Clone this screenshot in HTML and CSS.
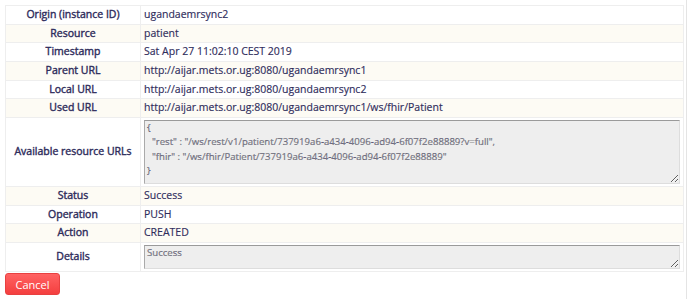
FILE: index.html
```html
<!DOCTYPE html>
<html lang="en">
<head>
  <meta charset="UTF-8" />
  <title>Sync Record Details</title>
  <meta name="viewport" content="width=device-width, initial-scale=1.0"/>
  <link rel="stylesheet" href="styles.css">
</head>
<body>
  <div class="page">
    <table class="details">
      <tr>
        <th>Origin (instance ID)</th>
        <td>ugandaemrsync2</td>
      </tr>
      <tr>
        <th>Resource</th>
        <td>patient</td>
      </tr>
      <tr>
        <th>Timestamp</th>
        <td>Sat Apr 27 11:02:10 CEST 2019</td>
      </tr>
      <tr>
        <th>Parent URL</th>
        <td>http://aijar.mets.or.ug:8080/ugandaemrsync1</td>
      </tr>
      <tr>
        <th>Local URL</th>
        <td>http://aijar.mets.or.ug:8080/ugandaemrsync2</td>
      </tr>
      <tr>
        <th>Used URL</th>
        <td>http://aijar.mets.or.ug:8080/ugandaemrsync1/ws/fhir/Patient</td>
      </tr>
      <tr>
        <th>Available resource URLs</th>
        <td><textarea class="box box-tall" disabled>{
  "rest" : "/ws/rest/v1/patient/737919a6-a434-4096-ad94-6f07f2e88889?v=full",
  "fhir" : "/ws/fhir/Patient/737919a6-a434-4096-ad94-6f07f2e88889"
}</textarea></td>
      </tr>
      <tr>
        <th>Status</th>
        <td>Success</td>
      </tr>
      <tr>
        <th>Operation</th>
        <td>PUSH</td>
      </tr>
      <tr>
        <th>Action</th>
        <td>CREATED</td>
      </tr>
      <tr>
        <th>Details</th>
        <td><textarea class="box box-short" disabled>Success</textarea></td>
      </tr>
    </table>

    <button type="button" class="cancel">Cancel</button>
  </div>
</body>
</html>
```

FILE: styles.css
```css
html,
body {
  margin: 0;
  height: 100%;
}

body {
  font-family: "Open Sans", sans-serif;
  font-size: 10.5px;
  color: #2f2d5c;
  background: white;
}

.page {
  width: 687px;
  height: 100%;
  box-sizing: border-box;
  padding: 5px 0 0 5px;
  border-right: 1px solid #e4e4e4;
}

.details {
  width: 679px;
  border-collapse: collapse;
  border: 1px solid #eeeeee;
}

.details th,
.details td {
  border: 1px solid #eeeeee;
  padding: 1px 3px;
  line-height: 15.67px;
  vertical-align: middle;
  -webkit-text-stroke: 0.15px #2f2d5c;
}

.details th {
  width: 128px;
  text-align: center;
  font-weight: normal;
  -webkit-text-stroke: 0.4px #2f2d5c;
}

.details tr:nth-child(even) {
  background: #fdfbf4;
}

.box {
  display: block;
  width: 100%;
  box-sizing: border-box;
  margin: 1px 0;
  padding: 0 2px;
  font-family: "Open Sans", sans-serif;
  font-size: 9.6px;
  line-height: 14.3px;
  color: #888888;
  background: #eeeeee;
  border: 1px solid;
  border-color: #9a9a9a #dddddd #dddddd #aaaaaa;
  resize: vertical;
}

.box-tall {
  height: 64px;
}

.box-short {
  height: 24px;
}

.cancel {
  display: block;
  margin-top: 1px;
  width: 55px;
  height: 22px;
  padding: 0;
  font-family: "Open Sans", sans-serif;
  font-size: 11px;
  color: white;
  background: linear-gradient(#ff6262, #f43f3f);
  border: 1px solid #e84040;
  border-radius: 3px;
  cursor: pointer;
}
```
